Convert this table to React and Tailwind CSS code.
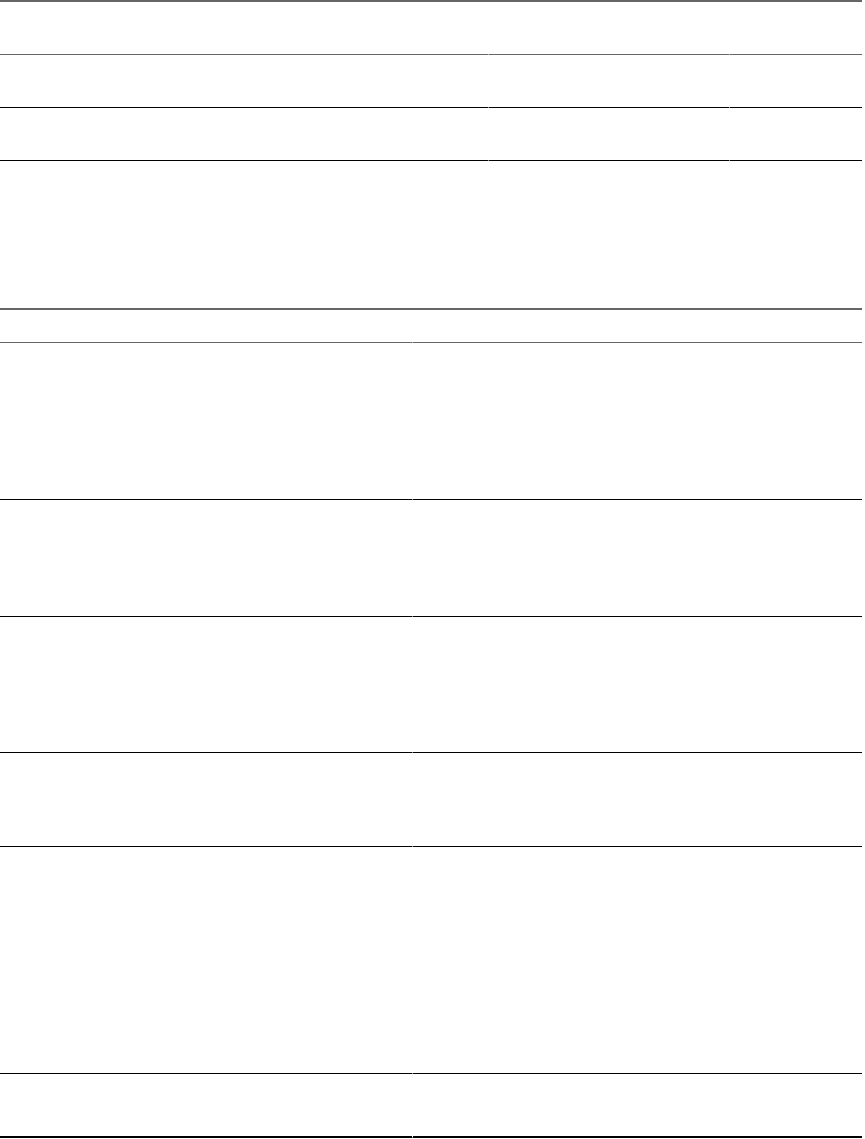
import React from 'react';

// column widths, px (1px seam between cells)
const topCols = ['w-[488px]', 'w-[240px]', 'w-[132px]'];
const bottomCols = ['w-[412px]', 'w-[449px]'];

const topRows = [
  { h: 'h-[53px]', line: 'border-[#666]', seam: 'bg-[#b3b3b3]' },
  { h: 'h-[53px]', line: 'border-black', seam: 'bg-[#8a8a8a]' },
  { h: 'h-[53px]', line: 'border-black', seam: 'bg-[#8a8a8a]' },
];

const bottomRows = [
  { h: 'h-[33px]', line: 'border-[#666]', seam: 'bg-[#b3b3b3]' },
  { h: 'h-[157px]', line: 'border-black', seam: 'bg-[#8a8a8a]' },
  { h: 'h-[117px]', line: 'border-black', seam: 'bg-[#8a8a8a]' },
  { h: 'h-[136px]', line: 'border-black', seam: 'bg-[#8a8a8a]' },
  { h: 'h-[94px]', line: 'border-black', seam: 'bg-[#8a8a8a]' },
  { h: 'h-[227px]', line: 'border-black', seam: 'bg-[#8a8a8a]' },
  { h: 'h-[64px]', line: 'border-black border-b-2', seam: 'bg-[#8a8a8a]' },
];

function Row({ row, cols }) {
  return (
    <div className={`flex ${row.h}`}>
      {cols.map((w, i) => (
        <React.Fragment key={i}>
          {i > 0 && (
            <div className="flex w-px flex-col justify-end">
              <div className={`h-px ${row.seam}`}></div>
            </div>
          )}
          <div className={`${w} border-b ${row.line} text-white`}></div>
        </React.Fragment>
      ))}
    </div>
  );
}

function Table({ rows, cols, className }) {
  return (
    <div className={`border-t-2 border-[#666] ${className}`}>
      {rows.map((row, i) => (
        <Row key={i} row={row} cols={cols} />
      ))}
    </div>
  );
}

function App() {
  return (
    <div className="min-h-screen w-[865px] bg-white font-['Liberation_Sans',sans-serif]">
      <div className="w-[862px]">
        {/* First table */}
        <Table rows={topRows} cols={topCols} />

        {/* Second table */}
        <Table rows={bottomRows} cols={bottomCols} className="mt-[147px]" />
      </div>
    </div>
  );
}

export default App;
